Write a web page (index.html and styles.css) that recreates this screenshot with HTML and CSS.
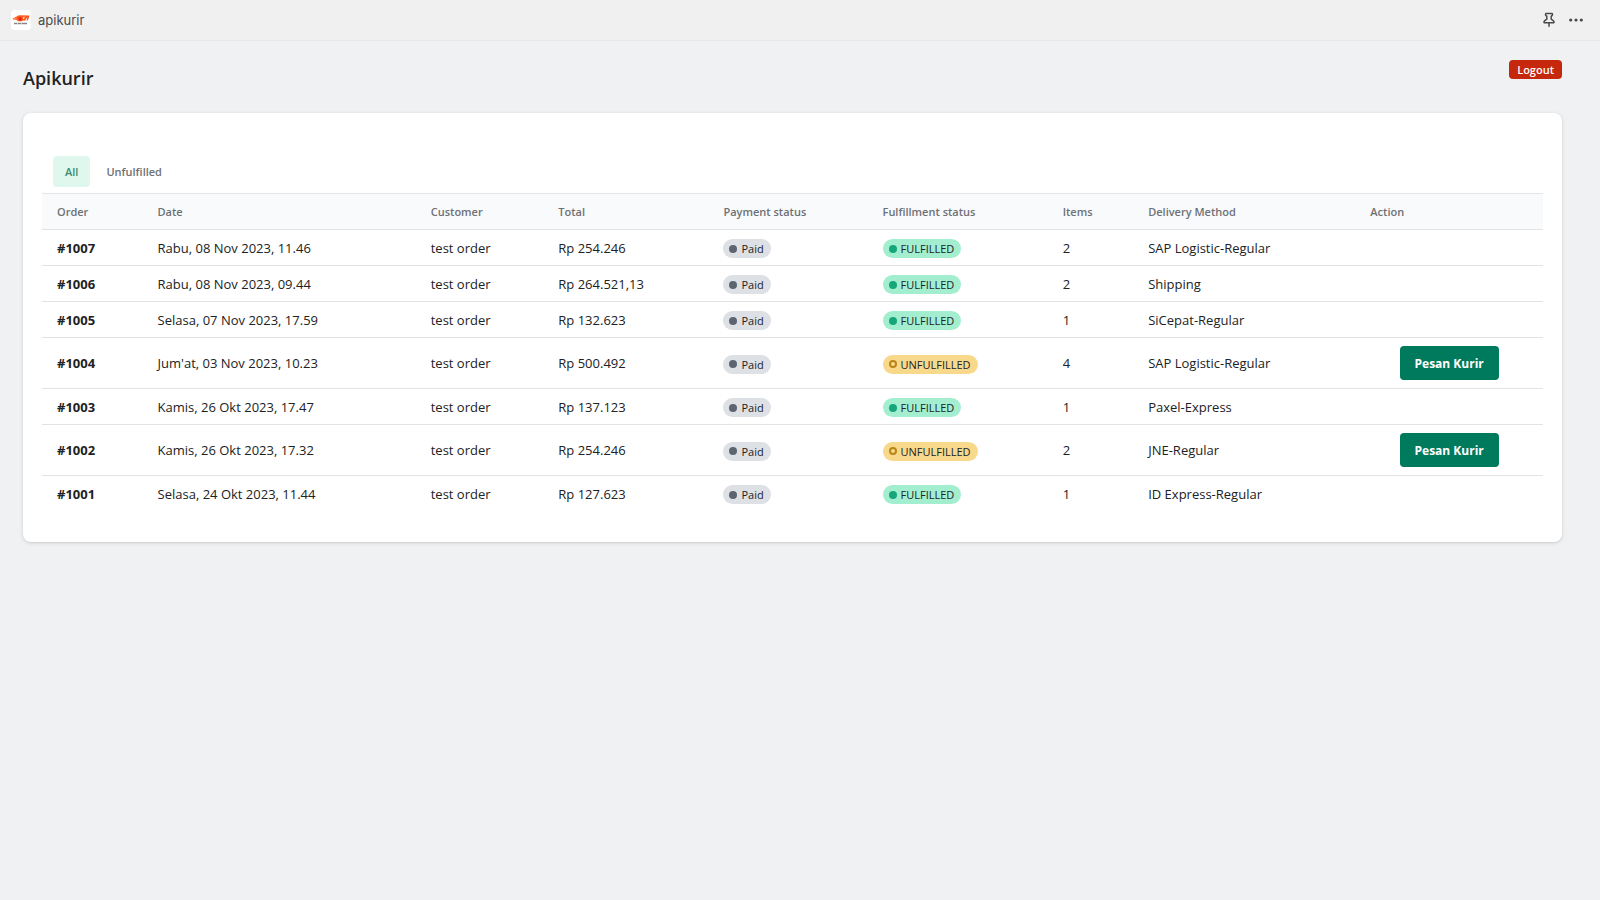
FILE: index.html
```html
<!DOCTYPE html>
<html lang="id">
<head>
<meta charset="utf-8">
<title>apikurir</title>
<link rel="stylesheet" href="styles.css">
</head>
<body>
<header class="topbar">
  <span class="app-logo">
    <svg viewBox="0 0 20 20" width="20" height="20" aria-hidden="true">
      <path d="M1.500 8.700 5.500 6.600 8 5.200 18.500 5.400 17.800 8 16.800 10.600H15.600L16 8.200 15 8.400 14.200 10.800 12 10.600 11 11.200H7L5.200 9.800 2.500 9.500Z" fill="#ff5a1f"/>
      <path d="M2 8.600 6 7.400 5.500 9.600Z" fill="#ff8a4c"/>
      <path d="M7.500 7.500h3v3H8Z" fill="#f01818"/>
      <path d="M12.500 6.800h1.200l-.8 2.200h-1Z" fill="#fff0e8"/>
      <path d="M3 13.500h3M6.500 13.500h4M11 13.500h5" stroke="#8a8585" stroke-width="1.400"/>
    </svg>
  </span>
  <span class="app-name">apikurir</span>
  <button class="icon-button" type="button" aria-label="Pin">
    <svg viewBox="0 0 12 16" width="12" height="16" aria-hidden="true" fill="none" stroke="#4a4a4a" stroke-width="1.500" stroke-linejoin="round" stroke-linecap="round">
      <path d="M2.800 1.600h6.400c.4 0 .4 1.600 0 1.800L8.200 4.400v2.800l2.300 1.600c.5.400.7 2 .2 2H1.300c-.5 0-.3-1.600.2-2l2.300-1.600V4.400L2.800 3.400c-.4-.2-.4-1.800 0-1.800ZM6 11v3.200"/>
    </svg>
  </button>
  <button class="icon-button" type="button" aria-label="More">
    <svg viewBox="0 0 14 4" width="14" height="4" aria-hidden="true" fill="#4a4a4a">
      <circle cx="1.700" cy="2" r="1.600"/><circle cx="7" cy="2" r="1.600"/><circle cx="12.300" cy="2" r="1.600"/>
    </svg>
  </button>
</header>
<main class="page">
  <div class="page-head">
    <h1 class="page-title">Apikurir</h1>
    <button class="logout" type="button">Logout</button>
  </div>
  <section class="card">
    <nav class="tabs">
      <button class="tab tab-active" type="button">All</button>
      <button class="tab" type="button">Unfulfilled</button>
    </nav>
    <table class="orders">
      <colgroup>
        <col class="col-order"><col class="col-date"><col class="col-customer"><col class="col-total"><col class="col-payment"><col class="col-fulfillment"><col class="col-items"><col class="col-delivery"><col class="col-action">
      </colgroup>
      <thead>
        <tr><th>Order</th><th>Date</th><th>Customer</th><th>Total</th><th>Payment status</th><th>Fulfillment status</th><th>Items</th><th>Delivery Method</th><th>Action</th></tr>
      </thead>
      <tbody>
        <tr><td class="order-id">#1007</td><td>Rabu, 08 Nov 2023, 11.46</td><td>test order</td><td>Rp 254.246</td><td><span class="badge paid">Paid</span></td><td><span class="badge done">FULFILLED</span></td><td>2</td><td>SAP Logistic-Regular</td><td></td></tr>
        <tr><td class="order-id">#1006</td><td>Rabu, 08 Nov 2023, 09.44</td><td>test order</td><td>Rp 264.521,13</td><td><span class="badge paid">Paid</span></td><td><span class="badge done">FULFILLED</span></td><td>2</td><td>Shipping</td><td></td></tr>
        <tr><td class="order-id">#1005</td><td>Selasa, 07 Nov 2023, 17.59</td><td>test order</td><td>Rp 132.623</td><td><span class="badge paid">Paid</span></td><td><span class="badge done">FULFILLED</span></td><td>1</td><td>SiCepat-Regular</td><td></td></tr>
        <tr><td class="order-id">#1004</td><td>Jum'at, 03 Nov 2023, 10.23</td><td>test order</td><td>Rp 500.492</td><td><span class="badge paid">Paid</span></td><td><span class="badge open">UNFULFILLED</span></td><td>4</td><td>SAP Logistic-Regular</td><td class="action"><button class="book" type="button">Pesan Kurir</button></td></tr>
        <tr><td class="order-id">#1003</td><td>Kamis, 26 Okt 2023, 17.47</td><td>test order</td><td>Rp 137.123</td><td><span class="badge paid">Paid</span></td><td><span class="badge done">FULFILLED</span></td><td>1</td><td>Paxel-Express</td><td></td></tr>
        <tr><td class="order-id">#1002</td><td>Kamis, 26 Okt 2023, 17.32</td><td>test order</td><td>Rp 254.246</td><td><span class="badge paid">Paid</span></td><td><span class="badge open">UNFULFILLED</span></td><td>2</td><td>JNE-Regular</td><td class="action"><button class="book" type="button">Pesan Kurir</button></td></tr>
        <tr><td class="order-id">#1001</td><td>Selasa, 24 Okt 2023, 11.44</td><td>test order</td><td>Rp 127.623</td><td><span class="badge paid">Paid</span></td><td><span class="badge done">FULFILLED</span></td><td>1</td><td>ID Express-Regular</td><td></td></tr>
      </tbody>
    </table>
  </section>
</main>
</body>
</html>
```
FILE: styles.css
```css
*, *::before { box-sizing: border-box; }
body {
  margin: 0;
  min-height: 100vh;
  background: #f0f1f3;
  color: #202223;
  font: 13px/20px "Segoe UI", "Open Sans", "Noto Sans", sans-serif;
}
button { border: 0; margin: 0; font-family: inherit; cursor: pointer; }

.topbar {
  display: flex;
  align-items: center;
  height: 41px;
  padding: 0 11px;
  background: #f0f0f0;
  border-bottom: 1px solid #e6e6e7;
}
.app-logo {
  display: flex;
  width: 20px;
  height: 20px;
  margin-right: 7px;
  background: #fff;
  border-radius: 4px;
}
.app-name { margin-right: auto; font: 13px/20px Inter, sans-serif; color: #4a4a4a; }
.icon-button {
  display: flex;
  align-items: center;
  justify-content: center;
  width: 27px;
  height: 28px;
  padding: 0;
  background: none;
}

.page { padding: 19px 38px 40px 23px; }
.page-head { display: flex; justify-content: space-between; align-items: flex-start; height: 53px; }
.page-title { margin: 4px 0 0; font-size: 18px; line-height: 28px; font-weight: 600; }
.logout {
  height: 19px;
  padding: 0 8px;
  border-radius: 4px;
  background: #c5280c;
  color: #fff;
  font-size: 11px;
  line-height: 19px;
  font-weight: 600;
}

.card {
  padding: 43px 19px 31px;
  background: #fff;
  border-radius: 8px;
  box-shadow: 0 1px 4px rgba(23, 24, 24, .12), 0 1px 2px rgba(0, 0, 0, .06);
}
.tabs { display: flex; gap: 4px; padding: 0 11px 6px; }
.tab {
  height: 31px;
  padding: 0 12px;
  border-radius: 4px;
  background: none;
  color: #6d7175;
  font-size: 11px;
  font-weight: 600;
}
.tab-active { background: #e0f7ee; color: #3d8b73; }

.orders { width: 100%; table-layout: fixed; border-collapse: separate; border-spacing: 0; }
.col-order { width: 6.7%; }
.col-date { width: 18.2%; }
.col-customer { width: 8.5%; }
.col-total { width: 11%; }
.col-payment { width: 10.6%; }
.col-fulfillment { width: 12%; }
.col-items { width: 5.7%; }
.col-delivery { width: 14.8%; }
.col-action { width: 12.5%; }
.orders th, .orders td { padding: 0 15px; text-align: left; white-space: nowrap; vertical-align: middle; }
.orders th {
  height: 37px;
  background: #f9fafc;
  border-top: 1px solid #e4e5e7;
  border-bottom: 1px solid #e1e3e5;
  color: #6d7175;
  font-size: 11px;
  font-weight: 600;
}
.orders td { height: 36px; border-bottom: 1px solid #e1e3e5; }
.orders tbody tr:last-child td { height: 35px; border-bottom: 0; }
.orders .order-id { font-weight: 700; }
.orders .action { height: 51px; text-align: center; }

.badge {
  display: inline-flex;
  align-items: center;
  gap: 4px;
  height: 19px;
  padding: 0 7px 0 6px;
  border-radius: 10px;
  font-size: 11px;
  line-height: 19px;
  vertical-align: middle;
}
.badge::before { content: ""; width: 8px; height: 8px; border-radius: 50%; }
.paid { background: #dde0e4; }
.paid::before { background: #5c6570; }
.done { background: #a4eed0; }
.done::before { background: #17a57a; }
.open { background: #f8d98c; }
.open::before { border: 2px solid #b98514; }

.book {
  height: 34px;
  padding: 0 15px;
  border-radius: 4px;
  background: #007a5c;
  color: #fff;
  font-size: 12px;
  font-weight: 700;
  vertical-align: middle;
}
```
